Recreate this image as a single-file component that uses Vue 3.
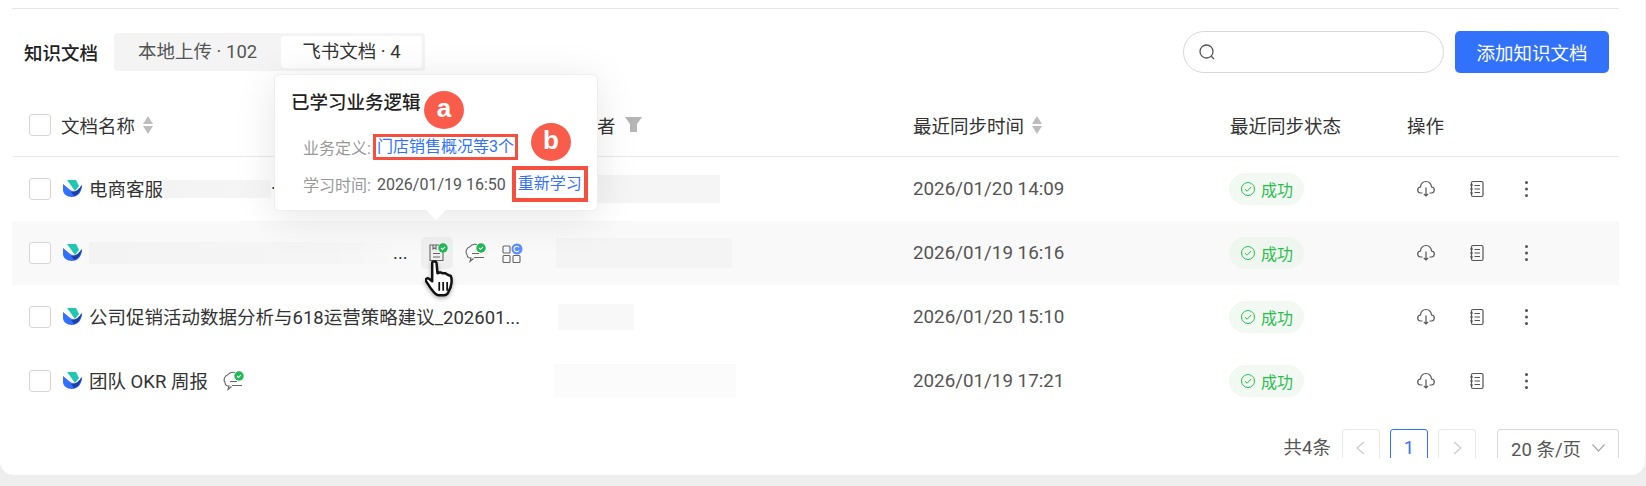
<template>
  <div class="page">
    <div class="card">
      <div class="top-line"></div>
      <div class="toolbar">
        <span class="title">知识文档</span>
        <div class="tabs">
          <span class="tab">本地上传 · 102</span>
          <span class="tab active">飞书文档 · 4</span>
        </div>
        <div class="spacer"></div>
        <div class="search">
          <svg width="18" height="18" viewBox="0 0 18 18" fill="none" stroke="#555" stroke-width="1.3">
            <circle cx="8.5" cy="8.5" r="6.5" />
            <path d="M13.300 13.300l2.700 2.700" />
          </svg>
        </div>
        <button class="add-btn">添加知识文档</button>
      </div>

      <div class="table">
        <div class="row head">
          <div class="col-name">
            <span class="check"></span>
            <span>文档名称</span>
            <svg class="sort" width="10" height="18" viewBox="0 0 10 18" fill="#bdbdbd"><path d="M5 0l5 8H0zM5 18l-5-8h10z" /></svg>
          </div>
          <div class="col-owner owner-head">
            <span>所有者</span>
            <svg width="17" height="15" viewBox="0 0 17 15" fill="#b5b5b5"><path d="M0 0h17l-5 7v8H5V7z" /></svg>
          </div>
          <div class="col-time">
            <span>最近同步时间</span>
            <svg class="sort" width="10" height="18" viewBox="0 0 10 18" fill="#bdbdbd"><path d="M5 0l5 8H0zM5 18l-5-8h10z" /></svg>
          </div>
          <div class="col-status">最近同步状态</div>
          <div class="col-ops">操作</div>
        </div>

        <div v-for="row in rows" :key="row.time" class="row" :class="{ hovered: row.hovered }">
          <div class="col-name">
            <span class="check"></span>
            <svg class="logo" width="20" height="18" viewBox="0 0 20 18">
              <path d="M4 0h9l3 6-4 5z" fill="#1fc7b0" />
              <path d="M0 4l6 5c3 2.500 6 3 9 1l4-5c0 7-4 12-10 12-5 0-9-3-9-7z" fill="#3370ff" />
              <path d="M8 12c4 1 8-3 11-7-1 6-4 10-8 11z" fill="#1f3f9e" />
            </svg>
            <span v-if="row.name" class="doc-name">{{ row.name }}</span>
            <span v-if="row.blur" class="blur" :style="{ width: row.blur + 'px', height: row.blurH + 'px' }"></span>
            <span v-if="row.suffix" class="suffix">{{ row.suffix }}</span>
            <div v-if="row.hovered" class="doc-icons">
              <span class="icon-box">
                <svg width="24" height="24" viewBox="0 0 24 24" fill="none" stroke="#666" stroke-width="1.1">
                  <path d="M14 4H5v15.500h13V11" />
                  <path d="M8 4v4l1.500-1 1.500 1V4" />
                  <path d="M8 12.500h7M8 16h7" />
                  <circle cx="18" cy="7" r="4.700" fill="#1db954" stroke="none" />
                  <path d="M16 7l1.500 1.500L20 5.800" stroke="#fff" />
                </svg>
              </span>
              <svg class="chat" width="24" height="24" viewBox="0 0 24 24" fill="none" stroke="#666" stroke-width="1.1">
                <path d="M14 3.500C10 2.500 8 4 6.500 6 3.500 7 2 11 4 13.500c0 2.500 2 3.500 4 3.500l-1 3.500 3.500-3" />
                <path d="M9 12.500h7M11 16.500h10" />
                <circle cx="18" cy="7" r="4.700" fill="#1db954" stroke="none" />
                <path d="M16 7l1.500 1.500L20 5.800" stroke="#fff" />
              </svg>
              <svg class="grid-icon" width="24" height="24" viewBox="0 0 24 24" fill="none" stroke="#666" stroke-width="1.1">
                <rect x="3" y="5" width="7" height="7" rx="1" />
                <rect x="3" y="14.500" width="7" height="7" rx="1" />
                <rect x="13" y="14.500" width="7" height="7" rx="1" />
                <circle cx="17" cy="8" r="5.500" fill="#5b8dff" stroke="none" />
                <path d="M19 6.500a2.700 2.700 0 1 0 0 3" stroke="#fff" />
              </svg>
            </div>
            <svg v-if="row.chat" class="chat" width="24" height="24" viewBox="0 0 24 24" fill="none" stroke="#666" stroke-width="1.1">
              <path d="M14 3.500C10 2.500 8 4 6.500 6 3.500 7 2 11 4 13.500c0 2.500 2 3.500 4 3.500l-1 3.500 3.500-3" />
              <path d="M9 12.500h7M11 16.500h10" />
              <circle cx="18" cy="7" r="4.700" fill="#1db954" stroke="none" />
              <path d="M16 7l1.500 1.500L20 5.800" stroke="#fff" />
            </svg>
          </div>
          <div class="col-owner">
            <span
              class="blur owner"
              :style="{ width: row.owner + 'px', height: row.ownerH + 'px', marginLeft: row.ownerX + 'px', background: row.ownerBg }"
            ></span>
          </div>
          <div class="col-time date">{{ row.time }}</div>
          <div class="col-status">
            <span class="badge">
              <svg width="16" height="16" viewBox="0 0 16 16" fill="none" stroke="#2ebd4f" stroke-width="1">
                <circle cx="8" cy="8" r="6.500" />
                <path d="M5 8l2.200 2.200L11 6" />
              </svg>
              成功
            </span>
          </div>
          <div class="col-ops">
            <svg width="20" height="20" viewBox="0 0 20 20" fill="none" stroke="#555" stroke-width="1.2">
              <path d="M6.500 14H5a3 3 0 0 1-.5-6A5.500 5.500 0 0 1 15.500 8a3 3 0 0 1-.5 6h-1.500" />
              <path d="M10 8.500v8.500M7.800 14.800L10 17l2.200-2.200" />
            </svg>
            <svg width="20" height="20" viewBox="0 0 20 20" fill="none" stroke="#555" stroke-width="1.2">
              <rect x="4.500" y="2.500" width="11.500" height="15" rx="1.500" />
              <path d="M7.500 6.500h5.500M7.500 10h5.500M7.500 13.500h5.500M3 6h3M3 10h3M3 14h3" />
            </svg>
            <svg width="20" height="20" viewBox="0 0 20 20" fill="#555">
              <circle cx="9.500" cy="3.500" r="1.500" />
              <circle cx="9.500" cy="10" r="1.500" />
              <circle cx="9.500" cy="16.500" r="1.500" />
            </svg>
          </div>
        </div>
      </div>

      <div class="pager">
        <span class="total">共4条</span>
        <span class="page-btn disabled">
          <svg width="14" height="16" viewBox="0 0 14 16" fill="none" stroke="#ccc" stroke-width="1.300"><path d="M10 2L3 8l7 6" /></svg>
        </span>
        <span class="page-btn current">1</span>
        <span class="page-btn disabled">
          <svg width="14" height="16" viewBox="0 0 14 16" fill="none" stroke="#ccc" stroke-width="1.300"><path d="M4 2l7 6-7 6" /></svg>
        </span>
        <span class="size-select">
          20 条/页
          <svg width="13" height="10" viewBox="0 0 13 10" fill="none" stroke="#aaa" stroke-width="1.200"><path d="M.5 1.500l6 6.500 6-6.500" /></svg>
        </span>
      </div>

      <div class="popover">
        <div class="pop-title">已学习业务逻辑</div>
        <div class="pop-line first">
          <span class="pop-label">业务定义:</span>
          <span class="pop-link box-a">门店销售概况等3个</span>
        </div>
        <div class="pop-line">
          <span class="pop-label">学习时间:</span>
          <span class="pop-time">2026/01/19 16:50</span>
          <span class="pop-link box-b">重新学习</span>
        </div>
        <span class="arrow"></span>
      </div>
      <span class="marker marker-a">a</span>
      <span class="marker marker-b">b</span>

      <svg class="cursor" width="32" height="37" viewBox="0 0 36 42">
        <path d="M9 2c2-1 4 0 4 2l1 11 3-1 3 1 3 0 3 2 3 1c2 4 1 12-2 17-1 3-3 5-6 5h-6c-3 0-5-3-8-7l-6-9c-1-2 1-4 3-3l4 3L8 4c0-1 0-2 1-2z" fill="#fff" stroke="#111" stroke-width="2.800" stroke-linejoin="round" />
        <path d="M16 25v10M20.500 25v10M25 25v10" stroke="#111" stroke-width="2" />
      </svg>
    </div>
  </div>
</template>

<script setup>
const rows = [
  { name: '电商客服', blur: 108, blurH: 18, suffix: '·', owner: 164, ownerH: 28, ownerX: 0, ownerBg: '#f5f5f5', time: '2026/01/20 14:09' },
  { blur: 304, blurH: 22, suffix: '...', owner: 176, ownerH: 30, ownerX: 0, ownerBg: '#f4f4f4', time: '2026/01/19 16:16', hovered: true },
  { name: '公司促销活动数据分析与618运营策略建议_202601...', owner: 76, ownerH: 26, ownerX: 2, ownerBg: '#f8f8f8', time: '2026/01/20 15:10' },
  { name: '团队 OKR 周报', chat: true, owner: 182, ownerH: 34, ownerX: -2, ownerBg: '#fbfbfb', time: '2026/01/19 17:21' }
]
</script>

<style>
html, body { margin: 0; background: #eeeeee; }
</style>

<style scoped>
.page {
  width: 1646px;
  height: 486px;
  overflow: hidden;
  font-family: Roboto, "Noto Sans CJK SC", sans-serif;
  color: #333;
}
.card {
  position: relative;
  width: 1645px;
  height: 475px;
  box-sizing: border-box;
  padding: 8px 26px 0 12px;
  background: #fff;
  border-radius: 0 0 14px 14px;
  overflow: hidden;
}
.top-line { height: 1px; background: #e8e8e8; }
.toolbar {
  display: flex;
  align-items: center;
  height: 42px;
  margin-top: 22px;
  padding: 0 10px 0 12px;
}
.title { font-size: 18.5px; font-weight: 500; color: #222; margin-right: 16px; }
.tabs {
  display: flex;
  gap: 3px;
  padding: 3px;
  background: #f4f4f4;
  border-radius: 3px;
}
.tab {
  padding: 0 21px;
  height: 32px;
  line-height: 32px;
  font-size: 18.5px;
  color: #555;
  white-space: nowrap;
}
.tab.active { background: #fff; border-radius: 4px; color: #333; }
.spacer { flex: 1; }
.search {
  display: flex;
  align-items: center;
  width: 261px;
  height: 42px;
  box-sizing: border-box;
  padding-left: 14px;
  border: 1px solid #d8d8d8;
  border-radius: 21px;
  margin-right: 11px;
}
.add-btn {
  width: 154px;
  height: 42px;
  border: none;
  border-radius: 5px;
  background: #3272fb;
  color: #fff;
  font: inherit;
  font-size: 18.5px;
}
.table { margin-top: 20px; }
.row {
  display: flex;
  align-items: center;
  height: 64px;
  font-size: 18.5px;
}
.row.head {
  border-bottom: 1px solid #eaeaea;
  box-sizing: border-box;
  color: #333;
}
.row.hovered { background: #f9f9f9; }
.col-name { width: 544px; display: flex; align-items: center; padding-left: 17px; box-sizing: border-box; }
.col-owner { width: 357px; }
.col-time { width: 317px; display: flex; align-items: center; }
.date { color: #555; font-size: 18.8px; }
.col-status { width: 177px; }
.col-ops { display: flex; align-items: center; gap: 30.5px; }
.row:not(.head) .col-ops { padding-left: 9px; }
.check {
  width: 20px;
  height: 20px;
  border: 1px solid #d6d6d6;
  border-radius: 3px;
  background: #fff;
  margin-right: 12px;
  flex: none;
}
.head .check { margin-right: 10px; }
.sort { margin-left: 8px; }
.owner-head { display: flex; align-items: center; gap: 9px; padding-left: 4px; box-sizing: border-box; }
.logo { margin-right: 6px; flex: none; }
.doc-name { white-space: nowrap; margin-bottom: 2px; }
.blur {
  display: inline-block;
  background: linear-gradient(90deg, #f3f3f3, #f5f5f5 80%, #f8f8f8);
}
.blur.owner { display: block; }
.doc-icons { display: flex; align-items: center; gap: 10px; margin-left: 13px; }
.icon-box {
  width: 32px;
  height: 32px;
  display: flex;
  align-items: center;
  justify-content: center;
  background: #efefef;
  border-radius: 5px;
}
.chat { margin-left: 13px; }
.doc-icons .chat { margin-left: 0; }
.grid-icon { margin-left: 3px; }
.badge {
  display: inline-flex;
  align-items: center;
  gap: 5px;
  height: 32px;
  margin-left: -1px;
  padding: 0 11px;
  border-radius: 16px;
  background: #f2f9f3;
  color: #2ebd4f;
  font-size: 16px;
}
.hovered .badge { background: #eff6f0; }
.pager {
  display: flex;
  align-items: flex-start;
  justify-content: flex-end;
  height: 29px;
  margin-top: 16px;
  overflow: hidden;
  font-size: 18.5px;
  color: #555;
}
.total { margin-right: 11px; line-height: 38px; }
.page-btn {
  display: flex;
  align-items: center;
  justify-content: center;
  width: 38px;
  height: 38px;
  box-sizing: border-box;
  border: 1px solid #e8e8e8;
  border-radius: 3px;
  margin-right: 10px;
}
.page-btn.current { border-color: #3272fb; color: #3272fb; }
.size-select {
  display: flex;
  align-items: center;
  justify-content: space-between;
  width: 122px;
  height: 38px;
  box-sizing: border-box;
  padding: 0 13px;
  margin-left: 11px;
  border: 1px solid #d8d8d8;
  border-radius: 3px;
  white-space: nowrap;
}
.popover {
  position: absolute;
  left: 274px;
  top: 74px;
  width: 324px;
  height: 137px;
  box-sizing: border-box;
  padding: 17px 16px;
  background: #fff;
  border: 1px solid #eee;
  border-radius: 5px;
  box-shadow: 0 6px 40px rgba(0, 0, 0, 0.1);
}
.pop-title { font-size: 18.5px; font-weight: 500; color: #222; line-height: 22px; }
.pop-line { display: flex; align-items: center; font-size: 16px; height: 26px; margin-top: 11px; padding-left: 12px; white-space: nowrap; }
.pop-line.first { margin-top: 20px; }
.pop-label { color: #999; }
.pop-time { color: #555; margin-left: 6px; }
.pop-link { color: #3272fb; }
.box-a {
  margin-left: 5px;
  padding: 0 1px;
  line-height: 20px;
  outline: 3px solid #f5503f;
}
.box-b {
  margin-left: 10px;
  padding: 4px 2px;
  line-height: 20px;
  outline: 4px solid #f5503f;
}
.arrow {
  position: absolute;
  left: 154px;
  bottom: -7px;
  width: 14px;
  height: 14px;
  background: #fff;
  transform: rotate(45deg);
}
.marker {
  position: absolute;
  width: 40px;
  height: 38px;
  line-height: 34px;
  border-radius: 50%;
  background: #fa5c4c;
  color: #fff;
  text-align: center;
  font-size: 26px;
  font-weight: 700;
  font-family: "Liberation Sans", sans-serif;
}
.marker-a { left: 424px; top: 91px; }
.marker-b { left: 531px; top: 123px; }
.cursor {
  position: absolute;
  left: 425px;
  top: 260px;
  filter: drop-shadow(0 2px 2px rgba(0, 0, 0, 0.3));
}
</style>
